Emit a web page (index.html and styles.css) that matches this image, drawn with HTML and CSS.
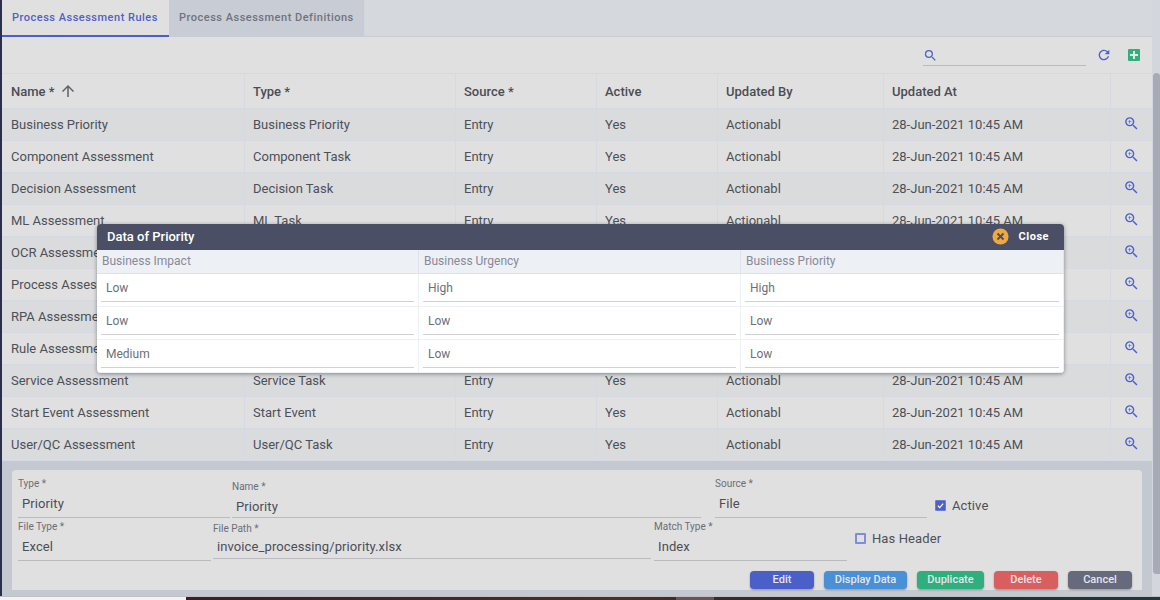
FILE: index.html
```html
<!DOCTYPE html>
<html lang="en">
<head>
<meta charset="UTF-8" />
<title>Process Assessment Rules</title>
<link rel="stylesheet" href="styles.css">
</head>
<body>
  <svg class="defs" width="0" height="0">
    <symbol id="zoom" viewBox="0 0 24 24"><path d="M15.5 14h-.79l-.28-.27A6.471 6.471 0 0 0 16 9.5 6.5 6.5 0 1 0 9.5 16c1.61 0 3.09-.59 4.23-1.57l.27.28v.79l5 4.99L20.49 19l-4.99-5zm-6 0C7.01 14 5 11.99 5 9.5S7.01 5 9.5 5 14 7.01 14 9.5 11.99 14 9.5 14z"/><path d="M12 10h-2v2H9v-2H7V9h2V7h1v2h2v1z"/></symbol>
  </svg>
  <div class="page">
    <div class="content">
      <div class="tabs">
        <div class="tab tab-active">Process Assessment Rules</div>
        <div class="tab tab-other">Process Assessment Definitions</div>
      </div>
      <div class="toolbar">
        <div class="search">
          <svg class="search-icon" viewBox="0 0 24 24"><path d="M15.5 14h-.79l-.28-.27A6.471 6.471 0 0 0 16 9.5 6.5 6.5 0 1 0 9.5 16c1.61 0 3.09-.59 4.23-1.57l.27.28v.79l5 4.99L20.49 19l-4.99-5zm-6 0C7.01 14 5 11.99 5 9.5S7.01 5 9.5 5 14 7.01 14 9.5 11.99 14 9.5 14z"/></svg>
        </div>
        <svg class="refresh-icon" viewBox="0 0 24 24"><path d="M17.65 6.35A7.958 7.958 0 0 0 12 4c-4.42 0-7.99 3.58-7.99 8s3.57 8 7.99 8c3.73 0 6.84-2.55 7.73-6h-2.08A5.99 5.99 0 0 1 12 18c-3.31 0-6-2.69-6-6s2.69-6 6-6c1.66 0 3.14.69 4.22 1.78L13 11h7V4l-2.35 2.35z"/></svg>
        <div class="add-btn"><svg viewBox="0 0 12 12"><path d="M5 2h2v3h3v2H7v3H5V7H2V5h3z"/></svg></div>
      </div>
      <table class="grid">
        <colgroup>
          <col class="c-name"><col class="c-type"><col class="c-source"><col class="c-active"><col class="c-by"><col class="c-at"><col class="c-view">
        </colgroup>
        <thead>
          <tr>
            <th>Name * <svg class="sort-icon" viewBox="0 0 24 24"><path d="M4 12l1.41 1.41L11 7.83V20h2V7.83l5.58 5.59L20 12l-8-8-8 8z"/></svg></th>
            <th>Type *</th>
            <th>Source *</th>
            <th>Active</th>
            <th>Updated By</th>
            <th>Updated At</th>
            <th></th>
          </tr>
        </thead>
        <tbody>
          <tr><td>Business Priority</td><td>Business Priority</td><td>Entry</td><td>Yes</td><td>Actionabl</td><td>28-Jun-2021 10:45 AM</td><td class="view"><svg><use href="#zoom"/></svg></td></tr>
          <tr><td>Component Assessment</td><td>Component Task</td><td>Entry</td><td>Yes</td><td>Actionabl</td><td>28-Jun-2021 10:45 AM</td><td class="view"><svg><use href="#zoom"/></svg></td></tr>
          <tr><td>Decision Assessment</td><td>Decision Task</td><td>Entry</td><td>Yes</td><td>Actionabl</td><td>28-Jun-2021 10:45 AM</td><td class="view"><svg><use href="#zoom"/></svg></td></tr>
          <tr><td>ML Assessment</td><td>ML Task</td><td>Entry</td><td>Yes</td><td>Actionabl</td><td>28-Jun-2021 10:45 AM</td><td class="view"><svg><use href="#zoom"/></svg></td></tr>
          <tr><td>OCR Assessment</td><td>OCR Task</td><td>Entry</td><td>Yes</td><td>Actionabl</td><td>28-Jun-2021 10:45 AM</td><td class="view"><svg><use href="#zoom"/></svg></td></tr>
          <tr><td>Process Assessment</td><td>Process Task</td><td>Entry</td><td>Yes</td><td>Actionabl</td><td>28-Jun-2021 10:45 AM</td><td class="view"><svg><use href="#zoom"/></svg></td></tr>
          <tr><td>RPA Assessment</td><td>RPA Task</td><td>Entry</td><td>Yes</td><td>Actionabl</td><td>28-Jun-2021 10:45 AM</td><td class="view"><svg><use href="#zoom"/></svg></td></tr>
          <tr><td>Rule Assessment</td><td>Rule Task</td><td>Entry</td><td>Yes</td><td>Actionabl</td><td>28-Jun-2021 10:45 AM</td><td class="view"><svg><use href="#zoom"/></svg></td></tr>
          <tr><td>Service Assessment</td><td>Service Task</td><td>Entry</td><td>Yes</td><td>Actionabl</td><td>28-Jun-2021 10:45 AM</td><td class="view"><svg><use href="#zoom"/></svg></td></tr>
          <tr><td>Start Event Assessment</td><td>Start Event</td><td>Entry</td><td>Yes</td><td>Actionabl</td><td>28-Jun-2021 10:45 AM</td><td class="view"><svg><use href="#zoom"/></svg></td></tr>
          <tr><td>User/QC Assessment</td><td>User/QC Task</td><td>Entry</td><td>Yes</td><td>Actionabl</td><td>28-Jun-2021 10:45 AM</td><td class="view"><svg><use href="#zoom"/></svg></td></tr>
        </tbody>
      </table>
      <div class="panel">
        <div class="card">
          <div class="form-row row-one">
            <div class="field f-type"><label>Type *</label><div class="value">Priority</div></div>
            <div class="field f-name"><label>Name *</label><div class="value">Priority</div></div>
            <div class="field f-source"><label>Source *</label><div class="value">File</div></div>
            <div class="check check-active"><span class="box box-on"><svg viewBox="0 0 10 10"><path d="M2 5.2l2.1 2.1L8 3" fill="none" stroke="#fff" stroke-width="1.3"/></svg></span>Active</div>
          </div>
          <div class="form-row row-two">
            <div class="field f-filetype"><label>File Type *</label><div class="value">Excel</div></div>
            <div class="field f-path"><label>File Path *</label><div class="value">invoice_processing/priority.xlsx</div></div>
            <div class="field f-match"><label>Match Type *</label><div class="value">Index</div></div>
            <div class="check check-header"><span class="box box-off"></span>Has Header</div>
          </div>
          <div class="actions">
            <button class="btn btn-edit">Edit</button>
            <button class="btn btn-display">Display Data</button>
            <button class="btn btn-duplicate">Duplicate</button>
            <button class="btn btn-delete">Delete</button>
            <button class="btn btn-cancel">Cancel</button>
          </div>
        </div>
      </div>
    </div>
    <div class="scrollbar"><div class="thumb"></div></div>
  </div>
  <div class="strip">
    <div class="strip-light"></div>
    <div class="strip-image"><div class="strip-patch"></div></div>
  </div>

  <div class="modal">
    <div class="modal-head">
      <span class="modal-title">Data of Priority</span>
      <span class="modal-close">
        <svg class="close-icon" viewBox="0 0 18 18"><circle cx="9" cy="9" r="8.5" fill="#f0a93e"/><path d="M5.8 5.8l6.4 6.4M12.2 5.8l-6.4 6.4" stroke="#4a4f66" stroke-width="2"/></svg>
        Close
      </span>
    </div>
    <div class="modal-grid">
      <div class="m-th">Business Impact</div><div class="m-th">Business Urgency</div><div class="m-th">Business Priority</div>
      <div class="m-td"><div class="m-input">Low</div></div><div class="m-td"><div class="m-input">High</div></div><div class="m-td"><div class="m-input">High</div></div>
      <div class="m-td"><div class="m-input">Low</div></div><div class="m-td"><div class="m-input">Low</div></div><div class="m-td"><div class="m-input">Low</div></div>
      <div class="m-td"><div class="m-input">Medium</div></div><div class="m-td"><div class="m-input">Low</div></div><div class="m-td"><div class="m-input">Low</div></div>
    </div>
  </div>
</body>
</html>
```

FILE: styles.css
```css
* {
  box-sizing: border-box;
}

html, body {
  margin: 0;
  padding: 0;
  height: 600px;
  overflow: hidden;
}

body {
  font-family: Roboto, "Liberation Sans", sans-serif;
  font-size: 13px;
  color: #4d5058;
  background-color: #e0e0e0;
}

.defs {
  position: absolute;
}

.page {
  display: flex;
  height: 596px;
  border-left: 2px solid #2a2f4d;
}

.content {
  width: 1150px;
}

/* tabs */
.tabs {
  display: flex;
  height: 37px;
  background-color: #d5d8dd;
  border-bottom: 1px solid #c8ccd6;
}

.tab {
  padding: 0 10px;
  font-size: 11px;
  font-weight: 500;
  line-height: 36px;
  letter-spacing: 0.5px;
  white-space: nowrap;
}

.tab-active {
  width: 167px;
  height: 37px;
  color: #4f60c6;
  background-color: #e0e0e0;
  border-bottom: 2px solid #4b5fcb;
}

.tab-other {
  width: 196px;
  color: #70737c;
  background-color: #c8ccd5;
  border-right: 1px solid #d3d6dc;
}

/* toolbar */
.toolbar {
  display: flex;
  align-items: center;
  height: 36px;
  padding-left: 921px;
}

.search {
  width: 163px;
  height: 20px;
  margin-top: 2px;
  border-bottom: 1px solid #b9bbbf;
}

.search-icon {
  display: block;
  width: 15px;
  height: 15px;
  margin-top: 2px;
  fill: #4f60c6;
}

.refresh-icon {
  width: 16px;
  height: 16px;
  margin-left: 10px;
  fill: #4f60c6;
}

.add-btn {
  width: 12px;
  height: 12px;
  margin-left: 16px;
  background-color: #2fae7e;
  border-radius: 1px;
}

.add-btn svg {
  display: block;
  width: 12px;
  height: 12px;
  fill: #e6e6e6;
}

/* table */
.grid {
  width: 1150px;
  height: 387px;
  table-layout: fixed;
  border-collapse: collapse;
}

.c-name { width: 242px; }
.c-type { width: 211px; }
.c-source { width: 141px; }
.c-active { width: 121px; }
.c-by { width: 166px; }
.c-at { width: 227px; }
.c-view { width: 42px; }

.grid th, .grid td {
  padding: 0 9px 0 8.5px;
  text-align: left;
  white-space: nowrap;
  overflow: hidden;
  border: 1px solid #d6d9e1;
  border-left: none;
}

.grid th:first-child, .grid td:first-child {
  padding-left: 9px;
}

.grid th {
  height: 35px;
  font-size: 13px;
  font-weight: 500;
  color: #4a4d55;
}

.grid td {
  height: 32px;
  font-size: 13px;
  font-weight: 400;
}

.grid tbody tr:nth-child(odd) {
  background-color: #dadbdd;
}

.sort-icon {
  width: 18px;
  height: 18px;
  margin-left: 1px;
  vertical-align: -4px;
  fill: #5e6066;
}

.grid td.view {
  padding: 0 0 3px 12px;
}

.view svg {
  display: block;
  width: 17px;
  height: 17px;
  fill: #4f60c6;
}

/* edit panel */
.panel {
  height: 135px;
  padding: 9px 10px 6px 10px;
  background-color: #c3c8d1;
}

.card {
  height: 120px;
  padding: 7px 0 0 6px;
  background-color: #e0e0e0;
  border-radius: 4px 4px 0 0;
}

.form-row {
  display: flex;
  align-items: flex-end;
}

.row-one {
  height: 41px;
}

.row-two {
  height: 43px;
}

.field label {
  display: block;
  font-size: 10px;
  line-height: 12px;
  color: #6b6e75;
}

.value {
  height: 28px;
  padding: 5px 4px 0 4px;
  font-size: 13px;
  line-height: 18px;
  letter-spacing: 0.1px;
  border-bottom: 1px solid #b9bbbf;
  color: #4b4e57;
}

.f-type { width: 212px; }
.f-name { width: 469px; margin-left: 2px; }
.f-source { width: 212px; margin-left: 14px; }
.f-filetype { width: 193px; }
.f-path { width: 438px; margin-left: 2px; margin-bottom: 2px; }
.f-match { width: 193px; margin-left: 3px; }

.f-name .value {
  height: 25px;
  padding-top: 5px;
}

.f-path .value {
  height: 24px;
  padding-top: 3px;
}

.check {
  display: flex;
  align-items: center;
  gap: 6px;
  font-size: 13px;
  letter-spacing: 0.1px;
}

.check-active {
  margin-left: 8px;
  margin-bottom: 5px;
}

.check-header {
  margin-left: 8px;
  margin-bottom: 15px;
}

.box {
  width: 11px;
  height: 11px;
  border-radius: 1px;
}

.box-on {
  background-color: #4f60c6;
  border: 1px solid #6b7cd6;
}

.box-off {
  border: 2px solid #7f8ed9;
}

.box-on svg {
  display: block;
  width: 9px;
  height: 9px;
}

.actions {
  display: flex;
  justify-content: flex-end;
  gap: 10px;
  padding-right: 10px;
  margin-top: 10px;
}

.btn {
  height: 18px;
  padding: 0 0 1px;
  border: none;
  border-radius: 4px;
  font-family: Roboto, "Liberation Sans", sans-serif;
  font-size: 11px;
  font-weight: 500;
  color: #e4e6ea;
  box-shadow: 0 1px 2px rgba(0, 0, 0, 0.35);
}

.btn-edit { width: 64px; background-color: #4b5fc9; }
.btn-display { width: 83px; background-color: #4a90d6; }
.btn-duplicate { width: 67px; background-color: #2fae7e; }
.btn-delete { width: 64px; background-color: #d95f5f; }
.btn-cancel { width: 64px; background-color: #666a7c; }

/* fake scrollbar */
.scrollbar {
  flex: 1;
  padding-top: 73px;
  background-color: #d3d6dc;
}

.thumb {
  width: 7px;
  height: 501px;
  margin-left: 1px;
  background-color: #a6abb6;
  border-radius: 4px 4px 0 4px;
}

/* bottom strip of the page behind */
.strip {
  display: flex;
  height: 4px;
  border-top: 1px solid #bfc0c2;
}

.strip-light {
  width: 186px;
  background-color: #f2f2f2;
}

.strip-image {
  flex: 1;
  display: flex;
  padding-left: 490px;
  background: linear-gradient(90deg, #3f1c20 0%, #4a3026 45%, #3a2a22 55%, #1c2f30 75%, #1d3a3e 100%);
}

.strip-patch {
  width: 38px;
  background-color: #6a5450;
}

/* popup */
.modal {
  position: absolute;
  left: 97px;
  top: 224px;
  width: 967px;
  height: 149px;
  background-color: #fff;
  border-radius: 4px;
  box-shadow: 0 1px 4px rgba(0, 0, 0, 0.4);
  overflow: hidden;
}

.modal-head {
  display: flex;
  justify-content: space-between;
  align-items: center;
  height: 26px;
  padding: 0 15px 1px 10px;
  background-color: #4a4f66;
  color: #fff;
}

.modal-title {
  font-size: 13px;
  font-weight: 500;
}

.modal-close {
  display: flex;
  align-items: center;
  gap: 10px;
  font-size: 11px;
  font-weight: 700;
  letter-spacing: 0.5px;
}

.close-icon {
  width: 17px;
  height: 17px;
}

.modal-grid {
  display: grid;
  grid-template-columns: 322px 322px 1fr;
  grid-template-rows: 24px 33px 33px 33px;
}

.m-th {
  padding-left: 5px;
  font-size: 12px;
  line-height: 22px;
  color: #868a9a;
  background-color: #edf0f5;
  border-right: 1px solid #e0e3ee;
  border-bottom: 1px solid #dfe2ee;
}

.m-td {
  padding: 0 4px 0 4px;
  border-right: 1px solid #edf0f5;
  border-bottom: 1px solid #edf0f5;
}

.m-input {
  height: 28px;
  padding: 5px 0 0 5px;
  font-size: 12px;
  line-height: 18px;
  color: #6e7077;
  border-bottom: 1px solid #d0d2d6;
}
```
